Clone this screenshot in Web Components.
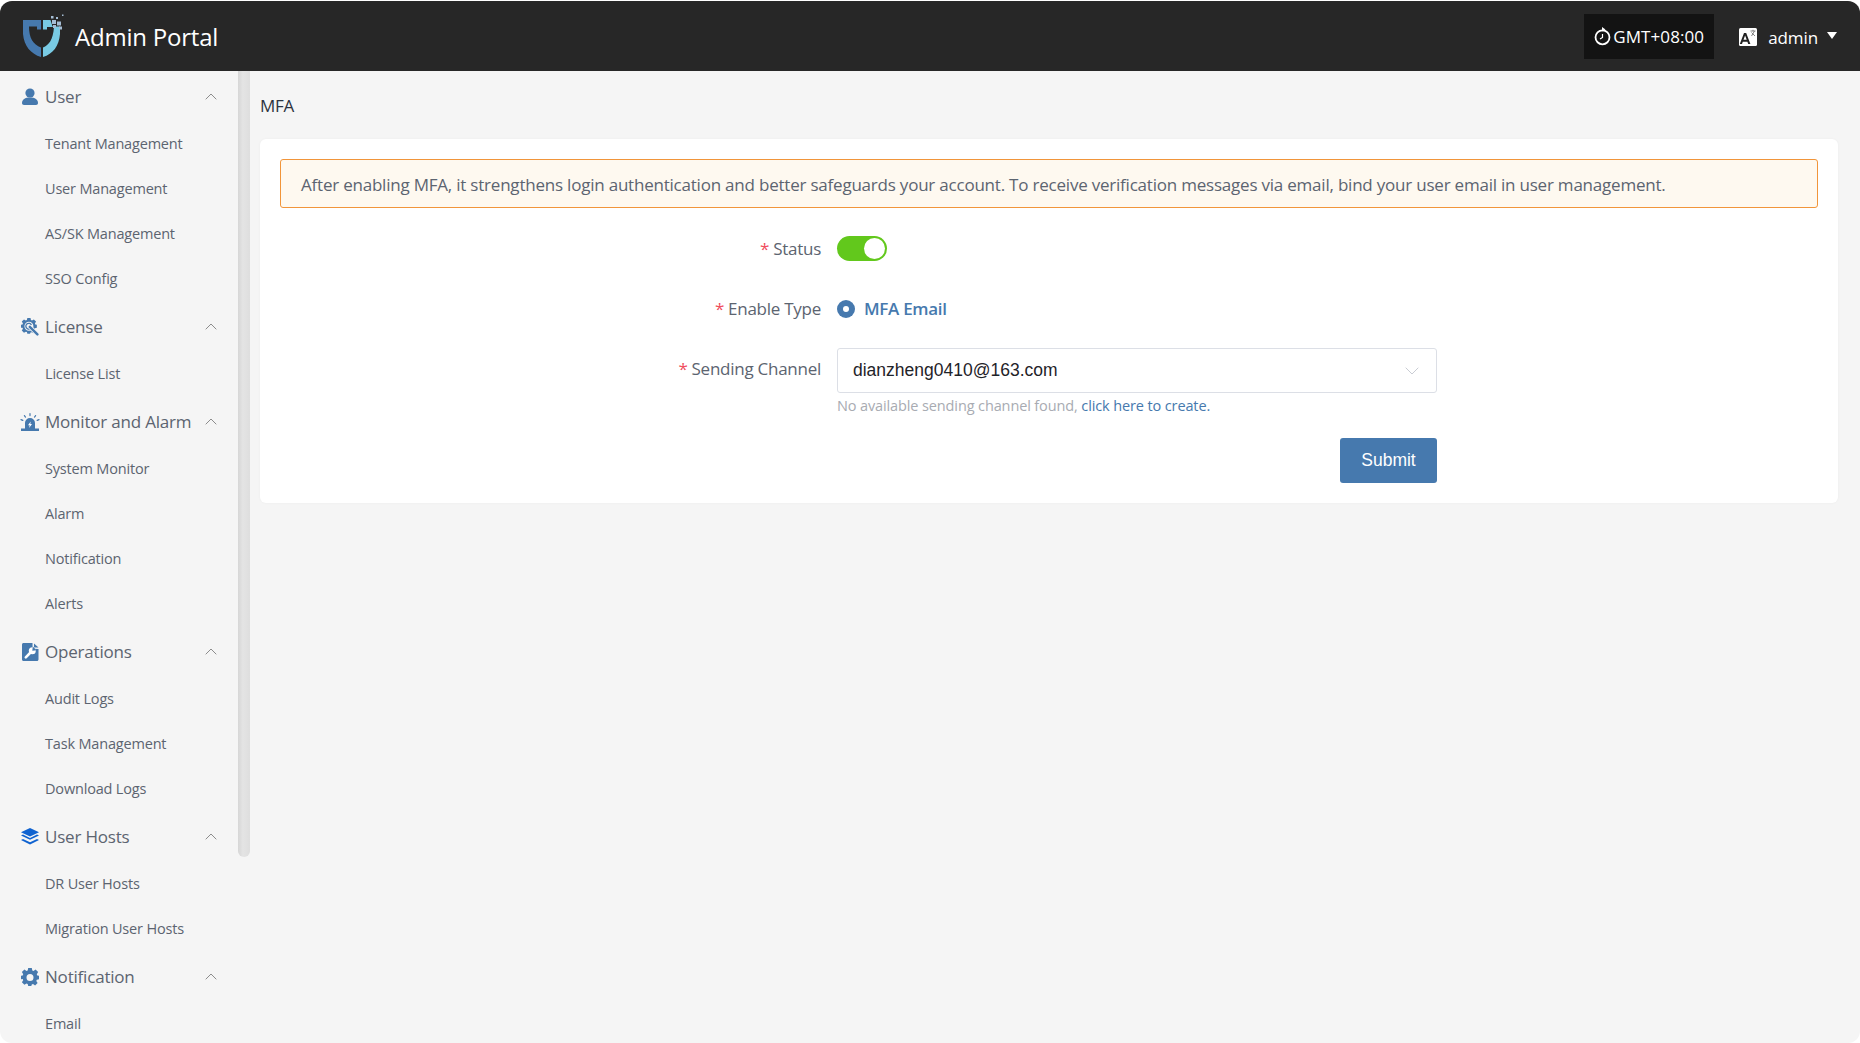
<!DOCTYPE html>
<html lang="en"><head><meta charset="utf-8"><title>Admin Portal</title>
<style>
html,body{margin:0;height:100%;background:#fff;overflow:hidden}
body{font-family:"Open Sans","Noto Sans",sans-serif;color:#5c6470}
</style></head><body>
<app-shell>
  <app-header slot="header"></app-header>
  <side-menu slot="side">
    <menu-group label="User" icon="user"><menu-item>Tenant Management</menu-item><menu-item>User Management</menu-item><menu-item>AS/SK Management</menu-item><menu-item>SSO Config</menu-item></menu-group>
    <menu-group label="License" icon="license"><menu-item>License List</menu-item></menu-group>
    <menu-group label="Monitor and Alarm" icon="alarm"><menu-item>System Monitor</menu-item><menu-item>Alarm</menu-item><menu-item>Notification</menu-item><menu-item>Alerts</menu-item></menu-group>
    <menu-group label="Operations" icon="ops"><menu-item>Audit Logs</menu-item><menu-item>Task Management</menu-item><menu-item>Download Logs</menu-item></menu-group>
    <menu-group label="User Hosts" icon="layers"><menu-item>DR User Hosts</menu-item><menu-item>Migration User Hosts</menu-item></menu-group>
    <menu-group label="Notification" icon="gear"><menu-item>Email</menu-item></menu-group>
  </side-menu>
  <mfa-page></mfa-page>
</app-shell>
<script>
const GEAR="M7.200 0h3.600l.5 2.400 1.200.5 2.100-1.300 2.500 2.500-1.300 2.100.5 1.200L18 7.800v3.400l-2.200.5-.5 1.200 1.300 2-2.500 2.500-2.100-1.300-1.200.5-.5 1.400H7.200l-.5-2-1.200-.5-2.100 1.300-2.500-2.500 1.300-2-.5-1.200L0 11.200V7.800l1.700-.4.500-1.200L.9 4.100l2.500-2.500 2.100 1.300 1.200-.5z";
const ICONS={
user:`<svg width="18" height="18" viewBox="0 0 18 18"><circle cx="9" cy="5" r="4.600" fill="#4679ae"/><path d="M1 15c0-3.600 3-5.600 8-5.600s8 2 8 5.600c0 1.300-.8 2-2 2H3c-1.200 0-2-.7-2-2z" fill="#4679ae"/></svg>`,
license:`<svg width="18" height="18" viewBox="0 0 18 18"><path fill="#4679ae" fill-rule="evenodd" transform="scale(.88)" d="${GEAR}M9 4.300a5 5 0 1 0 0 10.200 5 5 0 0 0 0-10.200z"/><path fill="none" stroke="#4679ae" stroke-width="1.300" d="M10.400 7a2.900 2.900 0 1 0-1 3.600"/><path stroke="#f5f5f5" stroke-width="4" d="M9 9l6 6"/><path stroke="#4679ae" stroke-width="2.400" stroke-linecap="round" d="M8.800 8.800l7.600 7.600"/></svg>`,
alarm:`<svg width="20" height="18" viewBox="0 0 20 18"><path fill="#4679ae" d="M5 16V10a5 5 0 0 1 10 0v6zM1 15.500h18V18H1z"/><path fill="#fff" d="M10.800 8.500 8 12.300h1.700l-.6 2.700 2.900-3.900h-1.700z"/><path stroke="#4679ae" stroke-width="1.200" stroke-linecap="round" d="M10 .6v2M4.400 2.600l1.100 1.500M15.600 2.600l-1.100 1.500M1 6.600l1.800.8M19 6.600l-1.800.8"/></svg>`,
ops:`<svg width="17" height="18" viewBox="0 0 17 18"><path fill="#4679ae" d="M1.500 0H10.500L10.500 5.800 16.500 6v10.500c0 .8-.7 1.500-1.500 1.500H1.500C.7 18 0 17.300 0 16.500v-15C0 .7.700 0 1.500 0zM12 .5 16.500 4.500H12z"/><path stroke="#fff" stroke-width="2.600" stroke-linecap="round" d="M3.800 14.300 9 9"/><circle cx="10.300" cy="7.700" r="3.500" fill="#fff"/><path fill="#4679ae" d="M10.300 7.700 10.800 3.600 14.600 7.200z"/></svg>`,
layers:`<svg width="20" height="18" viewBox="0 0 20 18"><path fill="#0f62d0" d="M10 0l9 4.300-9 4.300-9-4.300z"/><path fill="#0f62d0" d="M1 7.500l2-.9 7 3.300 7-3.300 2 .9-9 4.300z"/><path fill="#0f62d0" d="M1 11.900l2-.9 7 3.300 7-3.300 2 .9-9 4.600z"/></svg>`,
gear:`<svg width="18" height="18" viewBox="0 0 18 18"><path fill="#4679ae" fill-rule="evenodd" d="${GEAR}M9 6a3.500 3.500 0 1 0 0 7 3.500 3.500 0 0 0 0-7z"/></svg>`
};
function def(name,html,extra){
  const t=document.createElement('template');t.innerHTML=html;
  customElements.define(name,class extends HTMLElement{
    constructor(){super();this.attachShadow({mode:'open'}).appendChild(t.content.cloneNode(true));}
    connectedCallback(){extra&&extra.call(this);}
  });
}
def('app-shell',`<style>
:host{display:flex;flex-direction:column;height:1042px;margin-top:1px;background:#f5f5f5;border-radius:12px;overflow:hidden}
.body{flex:1;display:flex;min-height:0}
</style><slot name="header"></slot><div class="body"><slot name="side"></slot><slot></slot></div>`);
def('app-header',`<style>
:host{display:flex;align-items:center;height:70px;flex:none;background:#272727;color:#fff}
.logo{margin-left:23px;display:block}
.title{margin-left:10px;font-size:24px;letter-spacing:-.22px;line-height:70px;padding-top:2px}
.tz{margin-left:auto;height:45px;width:130px;background:#131313;display:flex;align-items:center;justify-content:center;gap:2px;font-size:17px;letter-spacing:.07px;margin-top:1px}
.lang{margin-left:25px;display:block;margin-top:2px}
.user{margin-left:11px;font-size:17px;letter-spacing:-.1px;padding-top:3px}
.caret{margin:0 23px 0 9px;width:0;height:0;border:5.500px solid transparent;border-top:7px solid #fff;border-bottom:0;margin-top:-1px}
</style>
<svg class="logo" width="42" height="44" viewBox="0 0 42 44">
<path fill="#4679ae" d="M0 6H18V43C8 40 1 32 0 20ZM6 12.500C6 24 10 30.500 18 33.500V15.500H14V12.500Z" fill-rule="evenodd"/>
<path fill="#79cbe4" d="M20 6H27.500L29.500 12.500H37V20C36 32 30 40 20 43V33.500C26 31 30 26 31 13H24V15.500H20Z"/>
<g fill="#a5bdd4"><rect x="29" y="6" width="4" height="4"/><rect x="34" y="7.500" width="4" height="4"/><rect x="30" y="11" width="3" height="3"/><rect x="36" y="12.500" width="3" height="3"/><rect x="28" y="2" width="2.500" height="2.500"/><rect x="33" y="3" width="2" height="2"/><rect x="39" y="0.500" width="1.500" height="1.500"/></g>
</svg>
<span class="title">Admin Portal</span>
<div class="tz"><svg width="17" height="19" viewBox="0 0 17 19"><circle cx="8.500" cy="10.300" r="7" fill="none" stroke="#fff" stroke-width="1.800"/><path d="M8.500 7v3.500l-2.500 1.500" fill="none" stroke="#fff" stroke-width="1.200"/><path d="M8 0l3.500 2.500L8 4.500z" fill="#fff"/></svg><span>GMT+08:00</span></div>
<svg class="lang" width="18" height="18" viewBox="0 0 18 18"><rect width="18" height="18" rx="1.500" fill="#fff"/><path d="M.8 16 5 5h2.200l4.200 11H9.200l-.8-2.300H3.800L3 16zM4.500 11.800h3.200L6.100 7.400z" fill="#222"/><path d="M11.500 3h5M14 1.800v1.200M12.500 8l3-5M16 8l-3.500-3.500" stroke="#777" stroke-width=".9" fill="none"/></svg>
<span class="user">admin</span><span class="caret"></span>`);
def('side-menu',`<style>
:host{display:flex;flex:none;width:250px;height:972px;overflow:hidden;position:relative}
.list{width:238px;flex:none;padding-top:1px}
.thumb{width:12px;height:786px;background:linear-gradient(90deg,#d6d6d6,#e4e4e4 40%,#dedede);border-radius:0 0 6px 6px;flex:none}
</style><div class="list"><slot></slot></div><div class="thumb"></div>`);
def('menu-group',`<style>
:host{display:block}
.head{display:flex;align-items:center;height:50px;padding-left:20px;font-size:17px;letter-spacing:-.2px;color:#5c6470}
.ico{width:20px;height:20px;display:flex;align-items:center;justify-content:center;margin:0 5px 0 0;flex:none}
.lab{flex:1;white-space:nowrap;margin-bottom:2px}
.chev{margin-right:21px;flex:none;margin-bottom:1px}
</style><div class="head"><span class="ico"></span><span class="lab"></span><svg class="chev" width="12" height="7" viewBox="0 0 12 7"><path d="M.7 6.300 6 1l5.300 5.300" fill="none" stroke="#8c8c8c" stroke-width="1"/></svg></div><slot></slot>`,
function(){this.shadowRoot.querySelector('.lab').textContent=this.getAttribute('label');this.shadowRoot.querySelector('.ico').innerHTML=ICONS[this.getAttribute('icon')];});
def('menu-item',`<style>
:host{display:block;height:45px;line-height:43px;padding-left:45px;font-size:14.500px;letter-spacing:-.18px;color:#5c6470;white-space:nowrap}
</style><slot></slot>`);
def('ui-switch',`<style>
:host{display:block;width:50px;height:25px;border-radius:13px;background:#62c81c;position:relative}
i{position:absolute;right:2px;top:2px;width:21px;height:21px;border-radius:50%;background:#fff}
</style><i></i>`);
def('ui-radio',`<style>
:host{display:flex;align-items:center;gap:9px;font-size:17px;font-weight:600;letter-spacing:-.3px;color:#4679ae}
i{width:18px;height:18px;border-radius:50%;background:#4679ae;display:flex;align-items:center;justify-content:center}
i::after{content:"";width:6px;height:6px;border-radius:50%;background:#fff}
</style><i></i><slot></slot>`);
def('ui-select',`<style>
:host{display:flex;align-items:center;box-sizing:border-box;width:600px;height:45px;border:1px solid #dcdfe6;border-radius:3px;background:#fff;padding:0 17px 0 15px;font:17.500px "Liberation Sans",Arial,sans-serif;color:#1f2329}
span{flex:1;letter-spacing:0;margin-top:-1px}
</style><span><slot></slot></span><svg width="14" height="8" viewBox="0 0 14 8"><path d="M.7.7 7 7l6.300-6.300" fill="none" stroke="#c9ccd3" stroke-width="1"/></svg>`);
def('form-row',`<style>
:host{display:grid;grid-template-columns:541px 600px;column-gap:16px}
.l{text-align:right;font-size:17px;letter-spacing:-.26px;color:#5c6470;white-space:nowrap}
.l b{font-weight:400;color:#f04d5d;margin-right:4px}
</style><div class="l"><b>*</b><span class="t"></span></div><div><slot></slot></div>`,
function(){this.shadowRoot.querySelector('.t').textContent=this.getAttribute('label');});
def('mfa-page',`<style>
:host{display:block;flex:1;min-width:0;padding:0 22px 0 10px;box-sizing:border-box}
h1{margin:0;font-weight:400;font-size:17px;letter-spacing:-.25px;color:#2c3340;height:68px;line-height:69px;}
.card{background:#fff;border-radius:6px;height:364px;box-sizing:border-box;padding:20px;box-shadow:0 0 3px rgba(0,0,0,.04)}
.alert{height:49px;box-sizing:border-box;border:1px solid #f1953a;border-radius:3px;background:#fef9f0;padding:0 20px;line-height:49px;font-size:17px;letter-spacing:-.215px;color:#5c6470;white-space:nowrap}
.r1{margin-top:28px;align-items:center;height:25px;line-height:25px}
.r2{margin-top:35px;height:25px;line-height:25px}
.r3{margin-top:27px;line-height:41px}
ui-radio{height:25px}
.help{font-size:14.500px;letter-spacing:-.12px;color:#a8abb2;line-height:20px;margin-top:3px;white-space:nowrap}
.help a{color:#4679ae}
.act{display:flex;justify-content:flex-end;width:600px;margin-top:22px}
button{width:97px;height:45px;border:0;border-radius:3px;background:#4679ae;color:#fff;font:17.500px "Liberation Sans",Arial,sans-serif;padding:0}
</style>
<h1>MFA</h1>
<div class="card">
<div class="alert">After enabling MFA, it strengthens login authentication and better safeguards your account. To receive verification messages via email, bind your user email in user management.</div>
<form-row class="r1" label="Status"><ui-switch></ui-switch></form-row>
<form-row class="r2" label="Enable Type"><ui-radio>MFA Email</ui-radio></form-row>
<form-row class="r3" label="Sending Channel"><ui-select>dianzheng0410@163.com</ui-select><div class="help">No available sending channel found, <a>click here to create.</a></div><div class="act"><button>Submit</button></div></form-row>
</div>`);
</script>
</body></html>
